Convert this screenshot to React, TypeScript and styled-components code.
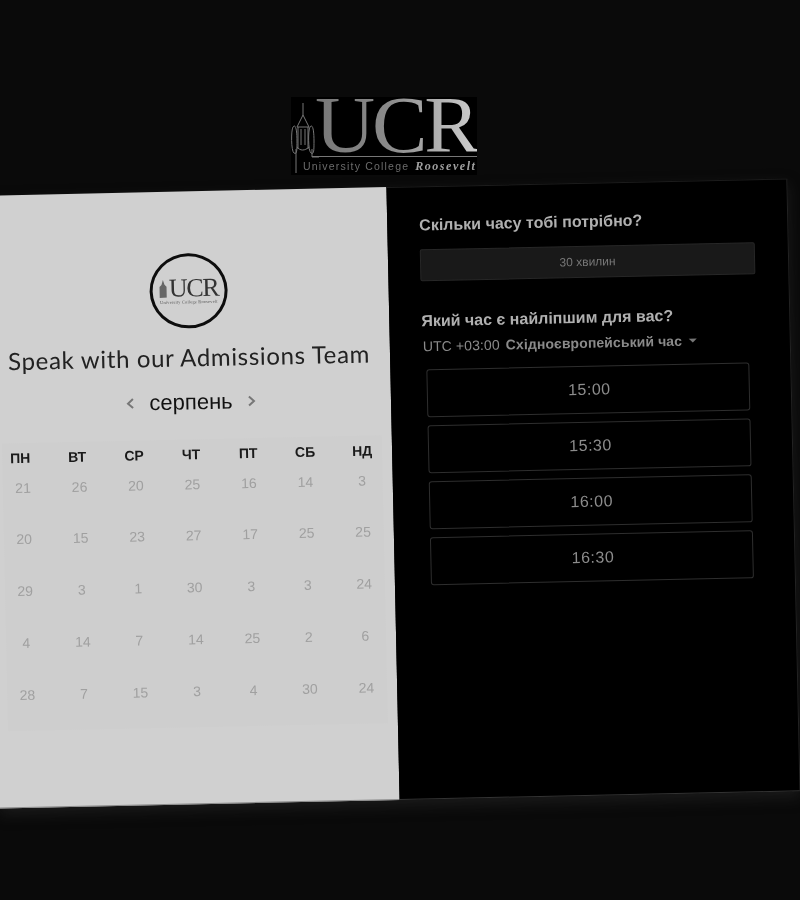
import React from "react";
import styled, { createGlobalStyle } from "styled-components";

const Global = createGlobalStyle`
  html, body { margin: 0; padding: 0; background: #0a0a0a; overflow: hidden; }
  body { font-family: "Liberation Sans", Arial, sans-serif; }
  #root { width: 800px; height: 900px; overflow: hidden; }
`;

const Page = styled.div`
  width: 800px;
  height: 900px;
  overflow: hidden;
  display: flex;
  flex-direction: column;
  background: #0a0a0a;
  filter: grayscale(1) blur(0.35px);
`;

const LogoRow = styled.div`
  height: 187px;
  flex: none;
  display: flex;
  padding: 97px 0 0 291px;
  box-sizing: border-box;
`;

const BigLogo = styled.div`
  width: 186px;
  height: 78px;
  background: #000;
  position: relative;
`;

const Tower = styled.svg`
  position: absolute;
  left: 0;
  top: 6px;
  width: 28px;
  height: 70px;
`;

const BigMark = styled.div`
  position: absolute;
  left: 24px;
  top: 0;
  font-family: "Liberation Serif", serif;
  font-size: 80px;
  line-height: 56px;
  letter-spacing: -3px;
  white-space: nowrap;
  background: linear-gradient(90deg, #777 0%, #8a8a8a 45%, #cfcfcf 100%);
  -webkit-background-clip: text;
  background-clip: text;
  color: transparent;
  transform-origin: left top;
  transform: scaleX(1.04);
`;

const Rule = styled.div`
  position: absolute;
  left: 21px;
  right: 0;
  top: 59px;
  height: 1px;
  background: #777;
`;

const Tagline = styled.div`
  position: absolute;
  left: 12px;
  top: 62px;
  display: flex;
  align-items: baseline;
  gap: 6px;
  font-size: 10.5px;
  letter-spacing: 1.2px;
  color: #6c6c6c;
  white-space: nowrap;
`;

const Script = styled.span`
  font-family: "Liberation Serif", serif;
  font-style: italic;
  font-weight: 700;
  font-size: 12px;
  letter-spacing: 1.55px;
  color: #a0a0a0;
`;

const Card = styled.div`
  flex: none;
  width: 801px;
  height: 613px;
  margin-left: -7px;
  display: flex;
  transform: rotate(-1.23deg);
  box-shadow: 0 6px 14px rgba(40, 40, 40, 0.55);
`;

const LeftPanel = styled.section`
  width: 400px;
  flex: none;
  background: #d0d0d0;
  display: flex;
  flex-direction: column;
  align-items: center;
  padding-top: 62px;
  box-sizing: border-box;
  border-bottom: 1px solid #8a8a8a;
`;

const Avatar = styled.div`
  width: 78px;
  height: 75px;
  box-sizing: border-box;
  border: 3px solid #0d0d0d;
  border-radius: 50%;
  display: flex;
  flex-direction: column;
  align-items: center;
  justify-content: center;
`;

const AvatarMark = styled.div`
  display: flex;
  align-items: flex-end;
  font-family: "Liberation Serif", serif;
  font-size: 26px;
  line-height: 22px;
  letter-spacing: -1.4px;
  color: #333;
`;

const MiniTower = styled.svg`
  width: 9px;
  height: 18px;
  margin: 0 1px 2px 0;
`;

const AvatarTag = styled.div`
  font-family: "Liberation Serif", serif;
  font-size: 4.4px;
  line-height: 5px;
  letter-spacing: 0.2px;
  color: #555;
  white-space: nowrap;
`;

const Title = styled.h1`
  margin: 14px 0 0;
  padding-right: 2px;
  font-family: Lato, sans-serif;
  font-weight: 400;
  font-size: 24px;
  line-height: 30px;
  letter-spacing: 0.67px;
  color: #222;
  white-space: nowrap;
`;

const MonthRow = styled.div`
  margin-top: 16px;
  display: flex;
  align-items: center;
  gap: 14px;
  height: 28px;
`;

const MonthName = styled.div`
  font-size: 22px;
  line-height: 28px;
  color: #111;
`;

const Chevron = styled.svg`
  width: 10px;
  height: 12px;
  fill: none;
  stroke: #777;
  stroke-width: 2;
`;

const Calendar = styled.div`
  margin-top: 22.5px;
  width: 100%;
  background: linear-gradient(#cecece, #cecece) no-repeat center / 380px 100%;
`;

const WeekHeader = styled.div`
  height: 30px;
  display: grid;
  grid-template-columns: repeat(7, 57px);
`;

const Weekday = styled.div`
  display: flex;
  align-items: center;
  justify-content: center;
  padding-right: 1px;
  font-size: 14px;
  font-weight: 700;
  color: #1a1a1a;
`;

const DayGrid = styled.div`
  padding-left: 2px;
  display: grid;
  grid-template-columns: repeat(7, 56.5px);
  grid-auto-rows: 51.8px;
`;

const Day = styled.div`
  display: flex;
  align-items: flex-start;
  justify-content: center;
  padding-top: 7px;
  font-size: 14px;
  line-height: 17px;
  color: #a0a0a0;
`;

const RightPanel = styled.section`
  flex: 1;
  background: #000;
  padding: 27px 0 0 32px;
  box-sizing: border-box;
  border-right: 1px solid #222;
  border-top: 1px solid #1c1c1c;
  border-bottom: 1px solid #333;
  display: flex;
  flex-direction: column;
`;

const Question = styled.h2`
  margin: 0;
  font-size: 16px;
  line-height: 22px;
  font-weight: 700;
  color: #b0b0b0;
`;

const Duration = styled.div`
  margin-top: 13px;
  width: 335px;
  height: 32px;
  box-sizing: border-box;
  display: flex;
  align-items: center;
  justify-content: center;
  background: #191919;
  border: 1px solid #272727;
  border-radius: 2px;
  font-size: 12px;
  color: #777;
`;

const SecondQuestion = styled(Question)`
  margin-top: 29px;
`;

const Zone = styled.div`
  margin-top: 3px;
  display: flex;
  align-items: center;
  gap: 6px;
  font-size: 14px;
  line-height: 22px;
  letter-spacing: 0.1px;
  color: #8a8a8a;
  padding-left: 1px;
`;

const ZoneName = styled.span`
  font-weight: 700;
`;

const Caret = styled.span`
  width: 0;
  height: 0;
  margin-left: 1px;
  border-left: 4px solid transparent;
  border-right: 4px solid transparent;
  border-top: 4px solid #777;
`;

const Slots = styled.div`
  margin: 12px 0 0 4px;
  width: 323px;
  display: flex;
  flex-direction: column;
  gap: 8px;
`;

const Slot = styled.button`
  height: 48px;
  box-sizing: border-box;
  padding: 0 0 0 2px;
  background: #000;
  border: 1px solid #2e2e2e;
  border-radius: 3px;
  font-family: "Liberation Sans", sans-serif;
  font-size: 16px;
  letter-spacing: 0.5px;
  color: #8c8c8c;
`;

const weekdays = ["ПН", "ВТ", "СР", "ЧТ", "ПТ", "СБ", "НД"];
const days = [
  21, 26, 20, 25, 16, 14, 3,
  20, 15, 23, 27, 17, 25, 25,
  29, 3, 1, 30, 3, 3, 24,
  4, 14, 7, 14, 25, 2, 6,
  28, 7, 15, 3, 4, 30, 24,
];
const slots = ["15:00", "15:30", "16:00", "16:30"];

const TowerIcon = () => (
  <Tower viewBox="0 0 28 70" fill="none" stroke="#777" strokeWidth="1">
    <path d="M12 0v12M12 12l-6 12h12zM7 24v22M17 24v22M10 26v16M14 26v16" />
    <path d="M2 24c-2 3-2 24 1 26s3-3 3-12-1-18-4-14zM19 24c-2 3-2 24 1 26s3-3 3-12-1-18-4-14z" />
    <path d="M5 46v24M6 44c3 4 8 4 12 0M21 46v8h7" />
  </Tower>
);

export default function App() {
  return (
    <Page>
      <Global />
      <LogoRow>
        <BigLogo>
          <TowerIcon />
          <BigMark>UCR</BigMark>
          <Rule />
          <Tagline>
            <span>University College</span>
            <Script>Roosevelt</Script>
          </Tagline>
        </BigLogo>
      </LogoRow>
      <Card>
        <LeftPanel>
          <Avatar>
            <AvatarMark>
              <MiniTower viewBox="0 0 9 18">
                <path d="M4.5 0L6 5l2 2v11H1V7l2-2z" fill="#666" />
              </MiniTower>
              UCR
            </AvatarMark>
            <AvatarTag>University College Roosevelt</AvatarTag>
          </Avatar>
          <Title>Speak with our Admissions Team</Title>
          <MonthRow>
            <Chevron viewBox="0 0 10 12">
              <path d="M8 1.5L3 6l5 4.5" />
            </Chevron>
            <MonthName>серпень</MonthName>
            <Chevron viewBox="0 0 10 12">
              <path d="M2 1.5L7 6l-5 4.5" />
            </Chevron>
          </MonthRow>
          <Calendar>
            <WeekHeader>
              {weekdays.map((d) => (
                <Weekday key={d}>{d}</Weekday>
              ))}
            </WeekHeader>
            <DayGrid>
              {days.map((d, i) => (
                <Day key={i}>{d}</Day>
              ))}
            </DayGrid>
          </Calendar>
        </LeftPanel>
        <RightPanel>
          <Question>Скільки часу тобі потрібно?</Question>
          <Duration>30 хвилин</Duration>
          <SecondQuestion>Який час є найліпшим для вас?</SecondQuestion>
          <Zone>
            <span>UTC +03:00</span>
            <ZoneName>Східноєвропейський час</ZoneName>
            <Caret />
          </Zone>
          <Slots>
            {slots.map((s) => (
              <Slot key={s}>{s}</Slot>
            ))}
          </Slots>
        </RightPanel>
      </Card>
    </Page>
  );
}
